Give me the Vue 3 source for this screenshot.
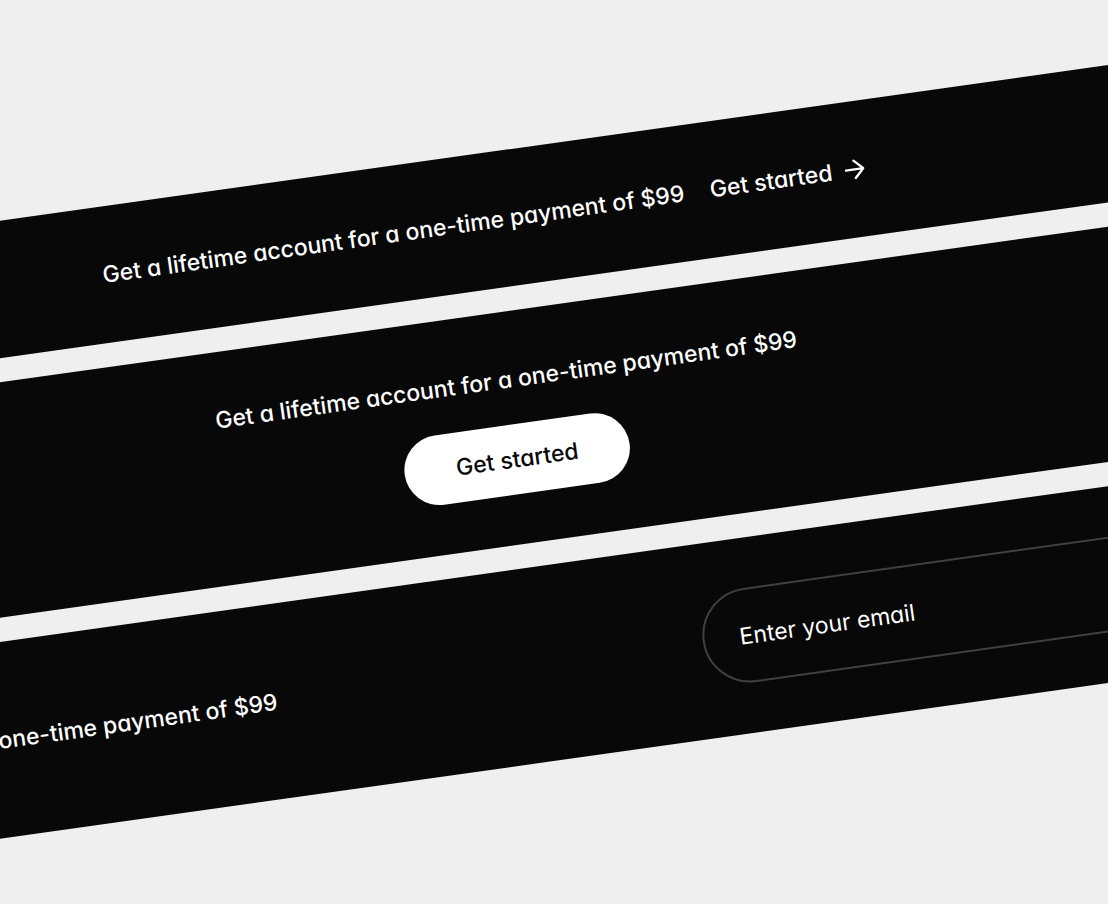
<script setup>
import { ref } from 'vue'

const offer = 'Get a lifetime account for a one-time payment of $99'
const email = ref('')
</script>

<template>
  <main class="stage">
    <div class="stack">
      <section class="banner inline">
        <p class="offer">{{ offer }}</p>
        <a class="link" href="#start">
          Get started
          <svg class="arrow" viewBox="0 0 20 20" fill="none" aria-hidden="true">
            <path d="M1.2 10H18.8M10 1.2L18.8 10L10 18.8" />
          </svg>
        </a>
      </section>

      <section class="banner stacked">
        <p class="offer">{{ offer }}</p>
        <button class="pill" type="button">Get started</button>
      </section>

      <section class="banner split">
        <p class="offer">{{ offer }}</p>
        <input v-model="email" class="field" type="email" placeholder="Enter your email" aria-label="Enter your email" />
      </section>
    </div>
  </main>
</template>

<style>
body {
  margin: 0;
  background: #efefef;
}
</style>

<style scoped>
.stage {
  display: flex;
  align-items: center;
  justify-content: center;
  height: 100vh;
  overflow: hidden;
  background: #efefef;
  color: #fff;
  font-family: Inter, "Liberation Sans", sans-serif;
  font-size: 23px;
  font-weight: 500;
  line-height: 36px;
  font-feature-settings: "cv11";
}

.stack {
  display: flex;
  flex: none;
  flex-direction: column;
  gap: 24px;
  width: 164%;
  transform: rotate(-8deg) translateX(-37px);
}

.banner {
  display: flex;
  align-items: center;
  padding: 50px;
  background: #080808;
}

.inline {
  justify-content: center;
  gap: 26px;
}

.stacked {
  flex-direction: column;
  gap: 27px;
}

.split {
  gap: 430px;
}

.offer {
  margin: 0;
  white-space: nowrap;
}

.link {
  display: flex;
  align-items: center;
  gap: 13px;
  color: inherit;
  text-decoration: none;
  white-space: nowrap;
}

.arrow {
  width: 20px;
  height: 20px;
  stroke: currentColor;
  stroke-width: 2.4;
  stroke-linecap: round;
  stroke-linejoin: round;
}

.pill {
  padding: 17px 52px;
  border: 0;
  border-radius: 36px;
  background: #fff;
  color: #080808;
  font: inherit;
  font-feature-settings: inherit;
  cursor: pointer;
}

.field {
  box-sizing: border-box;
  flex: 1;
  min-width: 0;
  height: 95px;
  padding: 0 35px;
  border: 2px solid #404040;
  border-radius: 48px;
  background: transparent;
  color: #fff;
  font: inherit;
  font-weight: 400;
  font-feature-settings: inherit;
}

.field::placeholder {
  color: #fff;
  opacity: 1;
}
</style>
